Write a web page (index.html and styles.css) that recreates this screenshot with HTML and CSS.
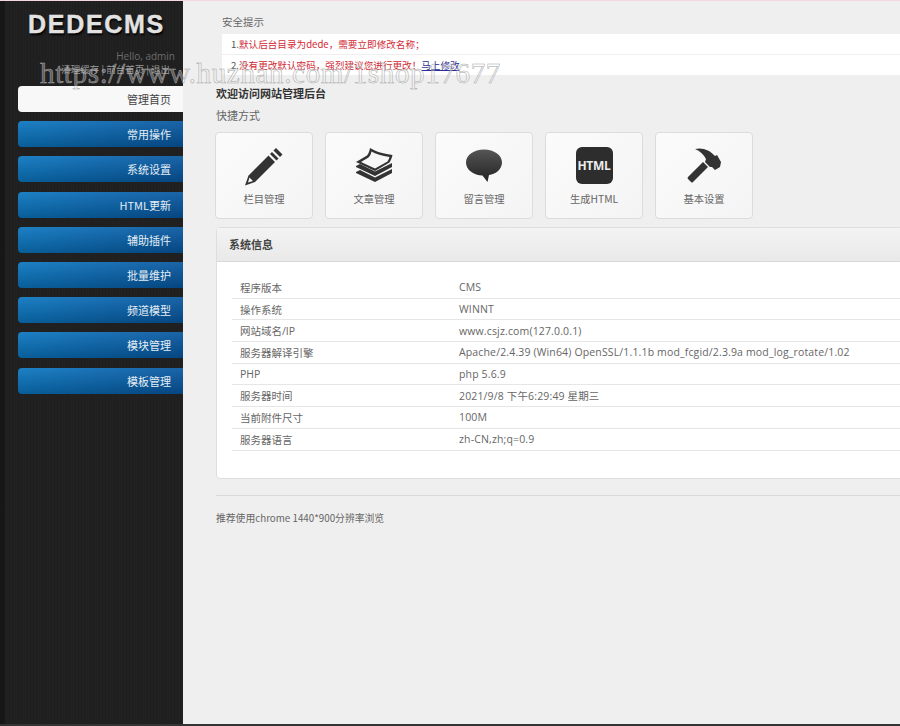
FILE: index.html
```html
<!DOCTYPE html>
<html lang="zh-CN">
<head>
    <meta charset="UTF-8">
    <meta name="viewport" content="width=device-width, initial-scale=1.0">
    <title>DEDECMS 管理后台</title>
    <link rel="stylesheet" href="styles.css">
</head>
<body>

<div class="watermark">https://www.huzhan.com/1shop17677</div>

<div class="layout">
    <aside class="sidebar">
        <div class="logo">DEDECMS</div>
        <div class="hello">Hello, admin</div>
        <div class="user-links">清理缓存 | 前台首页 | 退出</div>
        <nav class="nav">
            <a class="nav-item active">管理首页</a>
            <a class="nav-item">常用操作</a>
            <a class="nav-item">系统设置</a>
            <a class="nav-item">HTML更新</a>
            <a class="nav-item">辅助插件</a>
            <a class="nav-item">批量维护</a>
            <a class="nav-item">频道模型</a>
            <a class="nav-item">模块管理</a>
            <a class="nav-item">模板管理</a>
        </nav>
    </aside>

    <main class="main">
        <section class="notice">
            <div class="notice-title">安全提示</div>
            <div class="notice-row">1.<span class="red">默认后台目录为dede，需要立即修改名称；</span></div>
            <div class="notice-row">2.<span class="red">没有更改默认密码，强烈建议您进行更改！</span><a class="link">马上修改</a></div>
        </section>

        <h1 class="welcome">欢迎访问网站管理后台</h1>
        <div class="shortcut-title">快捷方式</div>

        <div class="shortcuts">
            <a class="shortcut">
                <svg class="icon" viewBox="0 0 40 40">
                    <path fill="#333" d="M32 1 38.500 7.500 36 10 29.500 3.500Z"/>
                    <path fill="#333" d="M28 5 34.500 11.500 32.500 13.500 26 7Z"/>
                    <path fill="#333" fill-rule="evenodd" d="M24.500 8.500 31 15 11 35 1 38.500 4.500 28.500ZM5.500 30.500 4 35.500 9 34Z"/>
                </svg>
                <span>栏目管理</span>
            </a>
            <a class="shortcut">
                <svg class="icon" viewBox="0 0 40 40">
                    <path fill="#333" d="M16 1C21 4 26 6 38.500 8C38 11 36.500 14 35.500 15.500L21 24 2 15 13 8.500C14.500 6.500 15.500 4 16 1ZM17.500 4.500C17 7 16 9 14.500 10.500L7 15 21 21.500 33.500 14.500C34.500 13 35 11.500 35.500 10 28 9 21.500 7 17.500 4.500Z"/>
                    <path fill="#333" d="M2 19 6 17 21 24.500 38 16V20L21 29 2 20Z"/>
                    <path fill="#333" d="M2 25 6 23 21 30.500 38 22V26L21 35 2 26Z"/>
                </svg>
                <span>文章管理</span>
            </a>
            <a class="shortcut">
                <svg class="icon" viewBox="0 0 40 40">
                    <defs>
                        <linearGradient id="bubble" x1="0" y1="0" x2="0" y2="1">
                            <stop offset="0" stop-color="#555"/>
                            <stop offset="1" stop-color="#222"/>
                        </linearGradient>
                    </defs>
                    <path fill="url(#bubble)" d="M20 2.500C30 2.500 38 8 38 15.500C38 22.500 31 27.500 25 28L23.500 35 18.500 28.500C10 28.500 2 23 2 15.500C2 8 10 2.500 20 2.500Z"/>
                </svg>
                <span>留言管理</span>
            </a>
            <a class="shortcut">
                <span class="html-icon">HTML</span>
                <span>生成HTML</span>
            </a>
            <a class="shortcut">
                <svg class="icon" viewBox="0 0 40 40">
                    <path fill="#333" d="M19 15 24 20 9 35Q8 36 7 35L4 32Q3 31 4 30Z"/>
                    <path fill="#333" d="M11 2C18 0 26 3 31 9L33 8 37 15 36 20 31 23 28 20 26 20 21 15 22 12C20 8 16 4 11 2Z"/>
                </svg>
                <span>基本设置</span>
            </a>
        </div>

        <section class="panel">
            <div class="panel-head">系统信息</div>
            <table class="info">
                <tr><td class="key">程序版本</td><td>CMS</td></tr>
                <tr><td class="key">操作系统</td><td>WINNT</td></tr>
                <tr><td class="key">网站域名/IP</td><td>www.csjz.com(127.0.0.1)</td></tr>
                <tr><td class="key">服务器解译引擎</td><td>Apache/2.4.39 (Win64) OpenSSL/1.1.1b mod_fcgid/2.3.9a mod_log_rotate/1.02</td></tr>
                <tr><td class="key">PHP</td><td>php 5.6.9</td></tr>
                <tr><td class="key">服务器时间</td><td>2021/9/8 下午6:29:49 星期三</td></tr>
                <tr><td class="key">当前附件尺寸</td><td>100M</td></tr>
                <tr><td class="key">服务器语言</td><td>zh-CN,zh;q=0.9</td></tr>
            </table>
        </section>

        <footer class="foot">推荐使用chrome 1440*900分辨率浏览</footer>
    </main>
</div>

</body>
</html>
```

FILE: styles.css
```css
* {
    box-sizing: border-box;
}

html, body {
    height: 100%;
}

body {
    margin: 0;
    overflow: hidden;
    background-color: #efefef;
    color: #555;
    font-family: "Noto Sans CJK SC", "Open Sans", sans-serif;
    font-size: 11px;
    border-top: 1px solid #f3d9dd;
    border-bottom: 2px solid #333;
}

.layout {
    display: flex;
    height: 100%;
}

/* sidebar */
.sidebar {
    width: 183px;
    flex-shrink: 0;
    padding: 12px 0 0 18px;
    background-color: #212121;
    background-image:
        linear-gradient(90deg, #171717 0, #171717 5px, transparent 5px),
        repeating-linear-gradient(90deg, rgba(0, 0, 0, 0.08) 0, rgba(0, 0, 0, 0.08) 1px, transparent 1px, transparent 3px);
}

.logo {
    margin-left: 10px;
    font-family: "Liberation Sans", sans-serif;
    font-size: 25px;
    line-height: 22px;
    font-weight: bold;
    letter-spacing: 1.700px;
    color: #e2e2e2;
    -webkit-text-stroke: 0.400px #e2e2e2;
    text-shadow: 1px 2px 2px #000;
}

.hello {
    margin-top: 14px;
    padding-right: 8px;
    text-align: right;
    font-family: "Open Sans", sans-serif;
    font-size: 10px;
    line-height: 14px;
    color: #6d6d6d;
}

.user-links {
    padding-right: 13px;
    text-align: right;
    font-size: 9.500px;
    line-height: 13px;
    color: #999;
}

.nav {
    display: flex;
    flex-direction: column;
    gap: 9.200px;
    margin-top: 10px;
}

.nav-item {
    display: block;
    height: 26px;
    padding-right: 12px;
    text-align: right;
    font-size: 11px;
    line-height: 26px;
    color: #e4eef6;
    border-radius: 4px 0 0 4px;
    background:
        linear-gradient(180deg, rgba(255, 255, 255, 0.08), rgba(0, 0, 0, 0.2)),
        linear-gradient(90deg, #0a76c0, #0757a0);
}

.nav-item.active {
    color: #444;
    background: #f8f8f8;
}

/* main column */
.main {
    flex: 1;
    min-width: 0;
    padding: 13px 0 0 33px;
}

.notice {
    margin-left: 6px;
}

.notice-title {
    height: 20px;
    font-size: 10.500px;
    line-height: 15px;
    color: #666;
}

.notice-row {
    height: 20px;
    margin-bottom: 0.500px;
    padding-left: 9px;
    font-size: 9.600px;
    line-height: 20px;
    background-color: #fff;
}

.red {
    color: #d22a35;
}

.link {
    color: #2c2c96;
    text-decoration: underline;
}

.welcome {
    margin: 8px 0 0;
    font-size: 11px;
    line-height: 20px;
    font-weight: bold;
    color: #333;
}

.shortcut-title {
    margin-top: 2px;
    line-height: 20px;
    color: #666;
}

.shortcuts {
    display: flex;
    gap: 12px;
    margin: 7px 0 0 -1px;
}

.shortcut {
    display: flex;
    flex-direction: column;
    align-items: center;
    width: 98px;
    height: 87px;
    padding-top: 14px;
    color: #666;
    background: linear-gradient(135deg, #fbfbfb, #f4f4f4);
    border: 1px solid #dcdcdc;
    border-radius: 4px;
}

.icon {
    width: 40px;
    height: 40px;
}

.html-icon {
    display: block;
    width: 37px;
    height: 37px;
    margin-bottom: 3px;
    font-family: "Open Sans", sans-serif;
    font-size: 12px;
    font-weight: bold;
    line-height: 37px;
    letter-spacing: -0.300px;
    text-align: center;
    color: #eee;
    background-color: #2d2d2d;
    border-radius: 6px;
}

.shortcut span:last-child {
    margin-top: 4px;
    font-size: 10.300px;
    line-height: 16px;
}

.panel {
    margin: 8px -10px 0 0;
    height: 252px;
    padding-bottom: 29px;
    background-color: #fff;
    border: 1px solid #dedede;
    border-radius: 4px;
}

.panel-head {
    height: 34px;
    padding-left: 12px;
    line-height: 32px;
    font-weight: bold;
    color: #444;
    background: linear-gradient(180deg, #f3f3f3, #e9e9e9);
    border-bottom: 1px solid #d8d8d8;
}

.info {
    width: 100%;
    margin: 15px 0 0 15px;
    border-collapse: collapse;
    font-family: "Open Sans", "Noto Sans CJK SC", sans-serif;
    font-size: 10.500px;
    letter-spacing: 0.150px;
    color: #666;
}

.info td {
    height: 21.700px;
    padding: 0;
    border-bottom: 1px solid #e6e6e6;
}

.info .key {
    width: 227px;
    padding-left: 8px;
    letter-spacing: 0;
}

.foot {
    margin-top: 16px;
    padding-top: 15px;
    line-height: 14px;
    color: #666;
    font-size: 9.800px;
    border-top: 1px solid #d8d8d8;
}

/* site watermark stamped over the shot */
.watermark {
    position: absolute;
    top: 56px;
    left: 40px;
    z-index: 5;
    font-family: "Liberation Serif", serif;
    font-size: 29px;
    line-height: 34px;
    letter-spacing: 0.650px;
    white-space: nowrap;
    color: rgba(255, 255, 255, 0.3);
    -webkit-text-stroke: 0.500px #a5a5a5;
}
```
